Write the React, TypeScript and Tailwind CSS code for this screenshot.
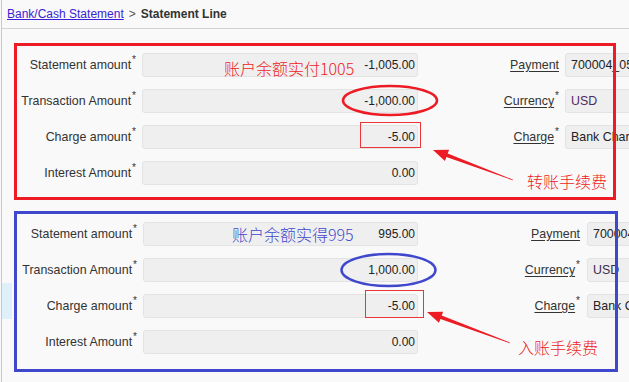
import React from "react";

const RED = "#ed1c24";
const BLUE = "#3f48cc";

type Field = { label: string; value: string; required?: boolean; tone?: string };

type Row = { left: Field; right?: Field };

const redRows: Row[] = [
  { left: { label: "Statement amount", value: "-1,005.00", required: true }, right: { label: "Payment", value: "700004_0516" } },
  { left: { label: "Transaction Amount", value: "-1,000.00", required: true }, right: { label: "Currency", value: "USD", required: true, tone: "text-[#4d2a63]" } },
  { left: { label: "Charge amount", value: "-5.00", required: true }, right: { label: "Charge", value: "Bank Charge", required: true } },
  { left: { label: "Interest Amount", value: "0.00", required: true } },
];

const blueRows: Row[] = [
  { left: { label: "Statement amount", value: "995.00", required: true }, right: { label: "Payment", value: "700004_0516" } },
  { left: { label: "Transaction Amount", value: "1,000.00", required: true }, right: { label: "Currency", value: "USD", required: true, tone: "text-[#3a2a4d]" } },
  { left: { label: "Charge amount", value: "-5.00", required: true }, right: { label: "Charge", value: "Bank Charge", required: true } },
  { left: { label: "Interest Amount", value: "0.00", required: true } },
];

function Star() {
  return <sup className="ml-px text-[10px] text-[#333]">*</sup>;
}

function Arrow({ from, to, color }: { from: [number, number]; to: [number, number]; color: string }) {
  const [x1, y1] = from;
  const [x2, y2] = to;
  const len = Math.hypot(x2 - x1, y2 - y1);
  const ux = (x2 - x1) / len;
  const uy = (y2 - y1) / len;
  const nx = -uy;
  const ny = ux;
  const bx = x2 - ux * 15;
  const by = y2 - uy * 15;
  const pts = [
    [x1 + nx * 0.4, y1 + ny * 0.4],
    [bx + nx * 1.8, by + ny * 1.8],
    [bx + nx * 6, by + ny * 6],
    [x2, y2],
    [bx - nx * 6, by - ny * 6],
    [bx - nx * 1.8, by - ny * 1.8],
    [x1 - nx * 0.4, y1 - ny * 0.4],
  ];
  return <polygon points={pts.map((p) => p.join(",")).join(" ")} fill={color} />;
}

function FormRows({ rows, blue }: { rows: Row[]; blue?: boolean }) {
  return (
    <div
      className={
        blue
          ? "grid grid-cols-[129px_275px_169px_160px] auto-rows-[24px] gap-y-[12px]"
          : "grid grid-cols-[128px_276px_147px_160px] auto-rows-[24px] gap-y-[12px]"
      }
    >
      {rows.map((row) => (
        <React.Fragment key={row.left.label}>
          <div className="flex items-center justify-end whitespace-nowrap pr-[6px] text-[12.4px] text-[#333]">
            {row.left.label}
            {row.left.required && <Star />}
          </div>
          <div className="flex items-center justify-end rounded-[3px] border border-[#e3e3e3] bg-[#efefef] pr-[2px] text-[#222]">
            {row.left.value}
          </div>
          {row.right ? (
            <>
              <div className={blue ? "flex items-center justify-end pr-[7px] text-[12.4px] text-[#333]" : "flex items-center justify-end pr-[6px] text-[12.4px] text-[#333]"}>
                <span className="underline underline-offset-2">{row.right.label}</span>
                {row.right.required && <Star />}
              </div>
              <div
                className={`flex items-center overflow-hidden whitespace-nowrap rounded-[3px] border border-[#e3e3e3] bg-[#efefef] pl-[5px] text-[12.4px] ${row.right.tone ?? "text-[#222]"}`}
              >
                {row.right.value}
              </div>
            </>
          ) : (
            <>
              <div />
              <div />
            </>
          )}
        </React.Fragment>
      ))}
    </div>
  );
}

export default function App() {
  return (
    <div className="h-[382px] w-[629px] overflow-hidden bg-[#f9f9f9] pl-px font-['Liberation_Sans',Arial,sans-serif] text-[12px]">
      <div className="h-full border-l border-[#c9c9c9]">
        <div className="flex h-[29px] items-center border-b border-[#d2d2d2] pl-[5px]">
          <span className="text-[#3b1fd6] underline">Bank/Cash Statement</span>
          <span className="mx-[5px] text-[#555]">&gt;</span>
          <span className="font-bold text-[#333]">Statement Line</span>
        </div>

        <div className="mt-[14px] flex">
          <div className="w-[12px]" />
          <section className="relative h-[157px] w-[602px] pt-[10px]">
            <FormRows rows={redRows} />
            <div className="pointer-events-none absolute inset-0 border-[3px] border-[#ed1c24]" />
            <svg className="pointer-events-none absolute inset-0" width="602" height="157">
              <ellipse cx="376" cy="57.5" rx="47" ry="14.5" fill="none" stroke={RED} strokeWidth="2.5" />
              <rect x="346.5" y="79.5" width="60" height="25" fill="none" stroke="#e8363a" strokeWidth="1" />
              <Arrow from={[499, 137]} to={[419, 107]} color={RED} />
            </svg>
            <span className="absolute left-[210px] top-[15px] font-['Noto_Sans_CJK_SC',sans-serif] text-[16px] leading-[20px] font-light text-[#ed1c24]">
              账户余额实付1005
            </span>
            <span className="absolute left-[513px] top-[128px] font-['Noto_Sans_CJK_SC',sans-serif] text-[16px] leading-[20px] font-light text-[#ed1c24]">
              转账手续费
            </span>
          </section>
        </div>

        <div className="mt-[11px] flex">
          <div className="w-[12px]">
            <div className="mt-[72px] h-[36px] w-[10px] bg-[#dff0fb]" />
          </div>
          <section className="relative h-[161px] w-[604px] pt-[11px]">
            <FormRows rows={blueRows} blue />
            <div className="pointer-events-none absolute inset-0 border-[3px] border-[#3f48cc]" />
            <svg className="pointer-events-none absolute inset-0" width="604" height="161">
              <ellipse cx="374.5" cy="59" rx="47" ry="16" fill="none" stroke={BLUE} strokeWidth="2.5" />
              <rect x="351.5" y="79.5" width="58" height="27" fill="none" stroke="#e8363a" strokeWidth="1" />
              <Arrow from={[496, 132]} to={[413, 101]} color={RED} />
            </svg>
            <span className="absolute left-[218px] top-[13px] font-['Noto_Sans_CJK_SC',sans-serif] text-[16px] leading-[20px] font-light text-[#3f48cc]">
              账户余额实得995
            </span>
            <span className="absolute left-[504px] top-[126px] font-['Noto_Sans_CJK_SC',sans-serif] text-[16px] leading-[20px] font-light text-[#ed1c24]">
              入账手续费
            </span>
          </section>
        </div>
      </div>
    </div>
  );
}
